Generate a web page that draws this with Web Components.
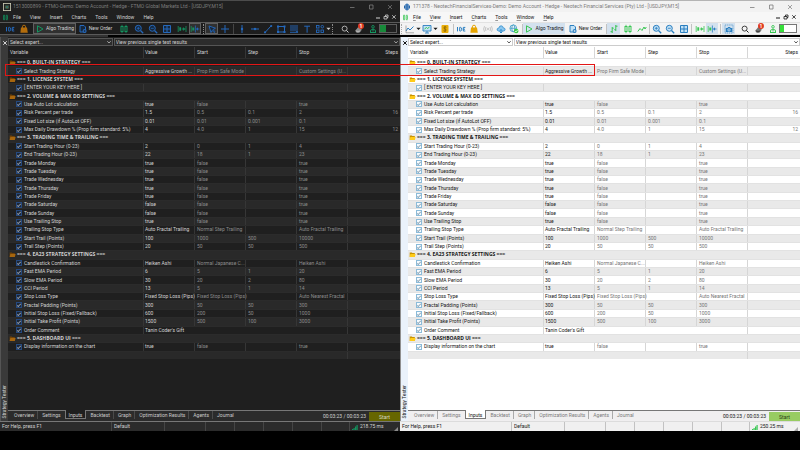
<!DOCTYPE html>
<html lang="en">
<head>
<meta charset="utf-8">
<title>Strategy Tester inputs</title>
<style>
html,body{margin:0;height:100%;background:#000}
body{font-family:Roboto,"Open Sans",sans-serif;font-size:5px;line-height:7px}
</style>
</head>
<body>
<tester-desk></tester-desk>
<script>
const ICONS={
ide:'<g fill="none" stroke="var(--blue)"><path d="M1.5 3v4.4M3.7 3.4v3.6h1c1.400 0 1.400-3.600 0-3.600zM9.300 3.400H7.300v3.600h2M7.300 5.200h1.700"/></g>',
bag:'<path d="M3.400 4V2.800a1.600 1.600 0 0 1 3.200 0V4" fill="none" stroke="var(--bag)"/><path d="M2 3.600h6l.8 5.200H1.400z" fill="var(--bag)"/>',
play:'<path d="M2.500 1.800v6.400L8 5z" fill="none" stroke="var(--green)"/>',
order:'<path d="M2 1.500h4l1.500 1.500v5H2z" fill="var(--pale)" stroke="var(--blue)"/><circle cx="6.600" cy="7" r="2" fill="var(--blue)"/><path d="M5.600 7h2M6.600 6v2" stroke="var(--bar)" stroke-width=".6"/>',
candle:'<g stroke="var(--green)" fill="none"><path d="M3 .8v8.400M7 .8v8.400" stroke-width=".8"/><rect x="2" y="2.500" width="2" height="5" fill="var(--bar)"/><rect x="6" y="2.500" width="2" height="5" fill="var(--bar)"/></g>',
zin:'<path d="M6.500 6.500L9.200 9.200" stroke="var(--blue)" stroke-width="1.300"/><circle cx="4.300" cy="4.300" r="3" fill="var(--pale)" stroke="var(--blue)"/><path d="M2.800 4.300h3M4.300 2.800v3" stroke="var(--blue)" stroke-width=".8"/>',
zout:'<path d="M6.500 6.500L9.200 9.200" stroke="var(--blue)" stroke-width="1.300"/><circle cx="4.300" cy="4.300" r="3" fill="var(--pale)" stroke="var(--blue)"/><path d="M2.800 4.300h3" stroke="var(--blue)" stroke-width=".8"/>',
grid:'<path d="M1.500 1.500h7v7h-7zM5 1.500v7M1.500 5h7" fill="var(--pale)" stroke="var(--blue)"/>',
shift:'<g stroke="var(--green)" fill="var(--green)"><path d="M1.200 2v6M9 2v6M5 5h3.500" stroke-width=".8"/><path d="M2.500 3.500h1.500v3H2.500zM6.200 3.500L7.800 5 6.200 6.500z" stroke-width=".4"/></g>',
shiftb:'<path d="M1.200 2v6" stroke="var(--green)" stroke-width=".8"/><path d="M2.300 3.500h2v3h-2z" fill="var(--green)"/><path d="M5.400 1.500v7M6.500 5h3" stroke="var(--blue)" stroke-width=".8"/><path d="M8 3.300L6 5l2 1.700z" fill="var(--blue)"/>',
pointer:'<path d="M2 2l6.500 2.200-2.500 1.300L8 7.800l-.8.8-2-2.200L4 8.500z" fill="var(--pale)" stroke="var(--blue)" stroke-width=".9"/>',
cross:'<path d="M5 1v8M1 5h8" stroke="var(--blue)"/>',
vline:'<path d="M5 1v8" stroke="var(--blue)"/><circle cx="5" cy="5" r="1.200" fill="var(--blue)"/>',
hline:'<path d="M1 5h8" stroke="var(--blue)"/><circle cx="5" cy="5" r="1.200" fill="var(--blue)"/>',
trend:'<path d="M2 8.500L8 2" stroke="var(--blue)"/><circle cx="2" cy="8.300" r="1.100" fill="var(--blue)"/><circle cx="8.200" cy="2" r="1.100" fill="var(--blue)"/>',
rect:'<path d="M2 2.500h6.500v5.500H2z" fill="none" stroke="var(--blue)"/><path d="M1 1.500h2v2H1zM7.500 1.500h2v2h-2zM1 7h2v2H1zM7.500 7h2v2h-2z" fill="var(--blue)"/>',
fibo:'<path d="M1 2h8M1 4h8M1 6h8M1 8.300h6" stroke="var(--blue)" stroke-width=".9"/><circle cx="8" cy="8" r="1.100" fill="var(--blue)"/>',
text:'<path d="M2.200 2.200h5.800M5.100 2.200v6.500" stroke="var(--blue)"/>',
shapes:'<g fill="none" stroke="var(--blue)" stroke-width=".9"><rect x="1.500" y="1.500" width="2.500" height="2.500"/><circle cx="7.300" cy="2.700" r="1.300"/><rect x="1.500" y="6" width="2.500" height="2.500"/><rect x="6" y="6" width="2.500" height="2.500"/></g>',
search:'<path d="M6.500 6.500L8.500 8.500" stroke="var(--ink)"/><circle cx="4.600" cy="4.600" r="2.500" fill="none" stroke="var(--ink)" stroke-width=".8"/>',
person:'<circle cx="5" cy="2.800" r="1.300" fill="none" stroke="var(--green)" stroke-width=".9"/><path d="M2.500 8.500V6.300Q5 3.700 7.500 6.300v2.200M5 5v2.500M2 8.500h6" fill="none" stroke="var(--green)"/>',
lines:'<path d="M1 7l2-3 2 2 3.500-3.500" fill="none" stroke="var(--blue)"/><path d="M1 1.500v7.300h8" fill="none" stroke="var(--dim)" stroke-width=".6"/>',
monitor:'<path d="M1 1.500h8v5.500H1zM3 9h4M5 7v2" fill="var(--pale)" stroke="var(--blue)" stroke-width=".9"/><path d="M2.500 5l2-1.500 1 1L7.500 3" fill="none" stroke="var(--green)"/>',
dollar:'<rect x="1.500" y="1" width="7" height="8" rx="1" fill="#e9ad08"/><path d="M6.400 3.300C5.500 2.500 3.700 3 3.800 4S6.300 5 6.300 6 4.500 7.500 3.500 6.700M5 2v6" fill="none" stroke="#7c5a00" stroke-width=".7"/>',
signal:'<g fill="none" stroke="#b9b9b9" stroke-width=".8"><circle cx="5" cy="5" r=".8"/><path d="M3 3Q1.900 5 3 7M7 3q1.100 2 0 4M1.500 2.200Q-.2 5 1.500 7.800M8.500 2.200Q10.200 5 8.500 7.800"/></g>',
cloud:'<path d="M2.500 7Q.5 6.500 1.200 4.800 1.800 4 2.700 4.200 3.300 1.700 5.200 1.800 7 2 7.300 3.900 9.300 4 9.100 5.800 8.800 7 7.500 7z" fill="#8cc7ef" stroke="#2d8bcc" stroke-width=".8"/><path d="M5 5v4M3.500 7.500L5 9l1.500-1.500" fill="none" stroke="#2d8bcc"/>',
globe:'<g fill="none" stroke="#3a9bc6" stroke-width=".8"><circle cx="4.300" cy="4.300" r="3.400"/><ellipse cx="4.300" cy="4.300" rx="1.500" ry="3.400"/><path d="M1 4.300h6.500"/></g><circle cx="7.200" cy="7" r="2.300" fill="#3dcc4b"/><path d="M6 7l1 1 1.600-2" fill="none" stroke="#fff" stroke-width=".7"/>',
bars:'<path d="M3.200 3v6M1.500 7.700h1.700M3.200 4.200h1.500M6.800 1v6M5.300 5.700h1.500M6.800 2.200h1.700" fill="none" stroke="var(--green)"/>',
zig:'<path d="M.8 7.500l2.200-3 2 2 2-3.500 1 2 1.300-2" fill="none" stroke="var(--green)"/>',
camera:'<rect x="1" y="1" width="8" height="8" fill="none" stroke="var(--blue)" stroke-width=".6" stroke-dasharray="1.300 .8"/><path d="M1.800 4h1.700l.7-1h1.800l.7 1h1.600v4H1.800z" fill="var(--blue)"/><circle cx="5" cy="5.900" r="1.200" fill="var(--blue)" stroke="#fff" stroke-width=".6"/>',
bell:'<path d="M1.200 6.500Q3 4.800 3.600 3.700 5.200 2 7 3.500 8.300 5 7.300 6.500L6 8.200Q4 9.500 2 8.300z" fill="var(--dim)"/><path d="M2 7Q4 8 6 7" fill="none" stroke="var(--ink)" stroke-width=".6"/>',
caret:'<path d="M2 4h6L5 7z" fill="var(--ink)"/>',
logo1:'<rect x=".5" y=".5" width="9" height="9" fill="#222" stroke="#d0d0b8"/><circle cx="5" cy="5" r="2" fill="#83a84c"/><path d="M3 3l4 4M7 3L3 7" stroke="#255c75"/>',
logo2:'<path d="M5 .5L7 1.500v7L5 9.500 3 8.500v-7z" fill="#1c5fa6"/><path d="M2 3v4M8 3v4" stroke="#1c5fa6" stroke-width="1.400"/><path d="M5 1v8" stroke="#b8d8f5" stroke-width=".6"/>',
folder:'<path d="M1 2h3l.8 1h3.500v5.300H1z" fill="var(--fold2)"/><path d="M2 4.200h7.500L8.300 8.500H.8z" fill="var(--fold)"/>'
};
const svg=(n,c='')=>`<svg class="${c}" viewBox="0 0 10 10" aria-hidden="true">${ICONS[n]||''}</svg>`;

const define=(name,css,html)=>customElements.define(name,class extends HTMLElement{
  connectedCallback(){
    const t=document.createElement('template');
    t.innerHTML=`<style>*{box-sizing:border-box}button,select,input{font:inherit;color:inherit;margin:0;padding:0;border:0;background:none;border-radius:0;outline:0}svg{display:block;flex:none;width:10px;height:10px}${css}</style>`+(typeof html==='function'?html(this):html);
    this.attachShadow({mode:'open'}).append(t.content.cloneNode(true));
  }
});

define('title-bar',`
:host{display:flex;align-items:center;height:11px;padding:0 7px 0 3px;gap:2px;background:var(--title);color:var(--titleInk)}
span{flex:1;white-space:nowrap}
svg{width:8px;height:8px}
div{display:flex;gap:13px}button{display:block;width:6px;height:6px}button svg{width:6px;height:6px}
`,h=>`${svg(h.getAttribute('logo'))}<span><slot></slot></span><div>
<button aria-label="Minimize"><svg viewBox="0 0 6 6"><path d="M1 3.500h4.500" stroke="currentColor" stroke-width=".8"/></svg></button>
<button aria-label="Maximize"><svg viewBox="0 0 6 6"><path d="M1.500 1h3.500v4H1.500z" fill="none" stroke="currentColor" stroke-width=".8"/></svg></button>
<button aria-label="Close"><svg viewBox="0 0 6 6"><path d="M1 1l4 4M5 1L1 5" stroke="currentColor" stroke-width=".7"/></svg></button></div>`);

define('menu-bar',`
:host{display:flex;align-items:center;height:10px;padding:0 3px 0 2px;background:var(--menu);color:var(--ink)}
nav{display:flex;flex:1;gap:9px;padding-left:4px}
svg{width:7px;height:7px}div{display:flex;gap:2px}button{display:block}div svg{width:6px;height:6px}
u{text-decoration-thickness:1px;text-decoration-color:var(--under)}
`,`${svg('candle')}<nav>${['File','View','Insert','Charts','Tools','Window','Help'].map(m=>`<button><u>${m[0]}</u>${m.slice(1)}</button>`).join('')}</nav><div>
<button aria-label="Minimize chart"><svg viewBox="0 0 6 6"><path d="M1 4h4" stroke="currentColor"/></svg></button>
<button aria-label="Restore chart"><svg viewBox="0 0 6 6"><path d="M1 2.500h3V5H1zM2.500 2.500V1H5v2.500H4" fill="none" stroke="currentColor" stroke-width=".8"/></svg></button>
<button aria-label="Close chart"><svg viewBox="0 0 6 6"><path d="M1.200 1.200l3.500 3.500M4.700 1.200L1.200 4.700" stroke="currentColor" stroke-width=".8"/></svg></button></div>`);

/* name:weight[:on]; sep draws a divider, grip a dotted handle, - is blank space */
const TOOLS={
dark:'-:3 ide:14 bag:13 -:3 play:43:on order:38 -:3 candle:14 -:1 zin:14 zout:14 grid:13 -:2 shift:14 shiftb:12:on grip:4 pointer:13:on cross:14 sep:3 vline:13 hline:13 trend:13 rect:13 fibo:14 text:12 shapes:13 caret:4 grip:4 -:4 search:13 bell:15 person:13 battery:18 -:3',
light:'grip:3 lines:13 caret:4 monitor:13 caret:4 dollar:15 sep:2 ide:13 bag:14 signal:13 cloud:13 globe:14 sep:2 play:42:on order:40 sep:2 bars:13:on candle:15 zig:13 sep:2 zin:13 zout:14 grid:13 sep:3 shift:13 shiftb:12:on sep:4 camera:13:on -:3 search:13 bell:15 person:13 battery:18 -:3'
};
define('tool-bar',`
:host{display:flex;align-items:stretch;height:13px;background:var(--bar);color:var(--ink);border-top:1px solid var(--barLine);border-bottom:1px solid var(--barLine)}
button,i{display:flex;align-items:center;justify-content:center;flex:1 1 0;min-width:0;position:relative;white-space:nowrap;overflow:visible}
.wide{gap:1px}
.on{background:var(--on);box-shadow:inset 0 0 0 1px var(--onLine)}
.sep::before{content:"";width:1px;height:10px;background:var(--sep)}
.grip::before{content:"";height:10px;border-left:1px dotted var(--grip)}
.caret svg{width:7px;height:7px}
b{position:absolute;right:2px;top:0;width:6px;height:6px;border-radius:3px;background:#e03a20;color:#fff;font-size:5px;line-height:6px;text-align:center}
.battery::before{content:"";width:100%;height:7px;border:1px solid var(--batt);background:linear-gradient(90deg,var(--charge) var(--level),var(--battBg) 0)}
`,h=>TOOLS[h.getAttribute('set')].split(' ').map(s=>{
  const [n,w,on]=s.split(':'),st=`style="flex-grow:${w}"`;
  if(n==='-'||n==='sep'||n==='grip'||n==='battery')return `<i class="${n==='-'?'':n}" ${st}></i>`;
  const label={play:'Algo Trading',order:'New Order'}[n]||'';
  return `<button class="${on||''} ${label?'wide':''} ${n}" ${st} aria-label="${label||n}">${svg(n)}${label?`<span>${label}</span>`:''}${n==='bell'?'<b>1</b>':''}</button>`;
}).join(''));

const R=[
['g','=== 0. BUILT-IN STRATEGY ==='],
['Select Trading Strategy','Aggressive Growth ...','Prop Firm Safe Mode','','Custom Settings (U...',''],
['g','=== 1. LICENSE SYSTEM ==='],
['[ ENTER YOUR KEY HERE ]',''],
['g','=== 2. VOLUME & MAX DD SETTINGS ==='],
['Use Auto Lot calculation','true','false','','true',''],
['Risk Percent per trade','1.5','0.5','0.1','2','16'],
['Fixed Lot size (if AutoLot OFF)','0.01','0.01','0.001','0.1',''],
['Max Daily Drawdown % (Prop firm standard: 5%)','4','4.0','1','15','12'],
['g','=== 3. TRADING TIME & TRAILING ==='],
['Start Trading Hour (0-23)','2','0','1','4',''],
['End Trading Hour (0-23)','22','18','1','23',''],
...['Monday','Tuesday','Wednesday','Thursday','Friday'].map(d=>['Trade '+d,'true','false','','true','']),
['Trade Saturday','false','false','','true',''],
['Trade Sunday','false','false','','true',''],
['Use Trailing Stop','true','false','','true',''],
['Trailing Stop Type','Auto Fractal Trailing','Normal Step Trailing','','Auto Fractal Trailing',''],
['Start Trail (Points)','100','1000','500','10000',''],
['Trail Step (Points)','20','50','50','500',''],
['g','=== 4. EA23 STRATEGY SETTINGS ==='],
['Candlestick Confirmation','Heiken Ashi','Normal Japanese C...','','Heiken Ashi',''],
['Fast EMA Period','6','5','1','20',''],
['Slow EMA Period','30','20','2','80',''],
['CCI Period','13','5','1','14',''],
['Stop Loss Type','Fixed Stop Loss (Pips)','Fixed Stop Loss (Pips)','','Auto Nearest Fractal',''],
['Fractal Padding (Points)','300','50','50','300',''],
['Initial Stop Loss (Fixed/Fallback)','600','200','50','1000',''],
['Initial Take Profit (Points)','1500','500','100','3000',''],
['Order Comment',"Tanin Coder's Gift"],
['g','=== 5. DASHBOARD UI ==='],
['Display information on the chart','true','false','','true',''],
['e']
];
define('input-table',`
:host{display:flex;flex-direction:column;min-height:0;background:var(--row);color:var(--ink)}
table{flex:312 1 0;min-height:0;display:grid;grid-template-rows:11px repeat(36,minmax(0,1fr));grid-template-columns:136fr repeat(4,51fr) 52fr}
thead,tbody{display:contents}
tr{display:grid;grid-template-columns:subgrid;grid-column:1/-1;min-height:0}
th,td{display:flex;align-items:center;padding:0 0 0 1px;white-space:nowrap;min-width:0;font-weight:400;text-align:left;border-right:1px solid var(--line)}
th:nth-child(n+3),td:nth-child(n+3){padding-left:2px}
th:last-child,td:last-child{justify-content:flex-end;border-right:0;padding-right:2px}
th:first-child{padding-left:2px}
tbody tr:nth-child(even){background:var(--alt)}
tbody tr{border-top:1px solid var(--rowLine)}
tbody td:nth-child(n+3){color:var(--dim)}
td.s5{grid-column:span 5}td.s4{grid-column:span 4}
td.g{grid-column:1/-1;justify-content:flex-start;font-family:"Open Sans",sans-serif;font-weight:700;padding:0 1px;gap:1px}
td.g svg{width:7px;height:7px}
td.k{padding-left:8px}
label{display:flex;align-items:center;gap:2px}
input{appearance:none;width:6px;height:6px;border:1px solid var(--tick);background:var(--tickBg);display:grid;place-items:center}
input:checked::after{content:"";width:3px;height:1px;border-left:1px solid var(--tickInk);border-bottom:1px solid var(--tickInk);transform:rotate(-45deg)}
.rest{flex:51 1 0}
`,()=>`<table><thead><tr>${['Variable','Value','Start','Step','Stop','Steps'].map(x=>`<th scope="col">${x}</th>`).join('')}</tr></thead><tbody>${R.map(r=>{
 if(r[0]==='g')return `<tr><td class="g" colspan="6">${svg('folder')}<span>${r[1].replace('&','&amp;')}</span></td></tr>`;
 if(r[0]==='e')return '<tr><td class="s5" colspan="5"></td><td></td></tr>';
 const k=`<td class="k"><label><input type="checkbox" checked><span>${r[0]}</span></label></td>`;
 if(r.length===2)return `<tr>${k}<td class="s4" colspan="4">${r[1]}</td><td></td></tr>`;
 return `<tr>${k}${r.slice(1).map(x=>`<td>${x}</td>`).join('')}</tr>`;}).join('')}</tbody></table><div class="rest"></div>`);

define('tester-panel',`
:host{display:grid;grid-template-columns:8px minmax(0,1fr);min-height:0;flex:1;background:var(--row);color:var(--ink)}
aside{display:flex;flex-direction:column;justify-content:space-between;align-items:center;background:var(--side);padding:3px 0;border-left:1px solid var(--edge)}
aside span{writing-mode:vertical-rl;transform:rotate(180deg);white-space:nowrap}
aside svg{width:6px;height:6px}
section{display:flex;flex-direction:column;min-width:0;min-height:0}
.pick{display:grid;grid-template-columns:105fr 287fr;height:10px;padding:1px 0;gap:1px;background:var(--row)}
.pick label{position:relative;display:flex;min-width:0}
select{appearance:none;flex:1;min-width:0;height:8px;padding:0 1px;border:1px solid var(--boxLine);background:var(--box);line-height:6px}
.pick svg{position:absolute;right:2px;top:2px;width:4px;height:4px;pointer-events:none}
input-table{flex:1}
footer{display:flex;height:11px;align-items:stretch;background:var(--tabs);border-top:1px solid var(--tabLine);padding-left:2px;color:var(--tabInk)}
footer button{padding:1px 3px 0 4px;height:8px;line-height:7px;white-space:nowrap;border-right:1px solid var(--tabSep)}
footer .now{height:9px;margin-top:-1px;padding:2px 3px 0;background:var(--row);color:var(--ink);border:1px solid var(--tabLine);border-top:0}
footer button:nth-child(2),footer button:nth-child(8){border-right-color:transparent}
footer output{margin-left:auto;padding:1px 3px 0;line-height:8px;color:var(--ink)}
footer .go{background:var(--go);width:31px;height:auto;border:0;padding:0;margin-top:1px;line-height:8px;color:var(--goInk)}
`,`<aside><svg viewBox="0 0 6 6"><path d="M1.200 1.200l3.600 3.600M4.800 1.200L1.200 4.800" stroke="currentColor"/></svg><span>Strategy Tester</span></aside>
<section><div class="pick">${['Select expert...','View previous single test results'].map(x=>`<label><select aria-label="${x}"><option>${x}</option></select><svg viewBox="0 0 4 4"><path d="M.3 1.200L2 3l1.700-1.800" fill="none" stroke="currentColor" stroke-width=".7"/></svg></label>`).join('')}</div>
<input-table></input-table>
<footer>${['Overview','Settings','Inputs','Backtest','Graph','Optimization Results','Agents','Journal'].map(t=>`<button class="${t==='Inputs'?'now':''}">${t}</button>`).join('')}<output>00:03:23 / 00:03:23</output><button class="go">Start</button></footer></section>`);

define('status-bar',`
:host{display:grid;grid-template-columns:112fr 53fr 41fr 29fr 29fr 29fr 29fr 28fr 50fr;height:10px;background:var(--status);color:var(--ink);border-top:1px solid var(--statusLine)}
div{display:flex;align-items:center;gap:2px;padding:0 2px;border-right:1px solid var(--sep);white-space:nowrap;min-width:0}
div:last-child{border:0}
svg{width:6px;height:6px}.size{margin-left:auto;width:4px;height:4px;align-self:end}
`,`<div>For Help, press F1</div><div>Default</div><div></div><div></div><div></div><div></div><div></div><div></div>
<div><svg viewBox="0 0 6 6"><path d="M0 6V5h1.200v1zM1.500 6V4h1.200v2zM3 6V2.500h1.200V6zM4.500 6V1h1.200v5z" fill="var(--green)"/></svg><slot></slot><svg class="size" viewBox="0 0 4 4"><path d="M4 0v4H0z" fill="var(--grip)"/></svg></div>`);

define('terminal-window',`
:host{display:flex;flex-direction:column;min-width:0;min-height:0;border-top:1px solid var(--top)}
:host([theme=dark]){--title:#202020;--titleInk:#7c7c7c;--menu:#202020;--ink:#d2d2d2;--under:transparent;--bar:#1d1d1d;--barLine:#5a5a5a;--top:#4c4c4c;--on:#303030;--onLine:#606060;--sep:#454545;--grip:#8a8a8a;--blue:#2468bc;--green:#139560;--pale:#16273b;--bag:#b36d0c;--dim:#8c8c8c;--batt:#5c5c5c;--battBg:#202020;--charge:#188a3a;--level:40%;--row:#1f1f1f;--alt:#292929;--line:#363636;--rowLine:#2b2b2b;--fold:#a7660e;--fold2:#704207;--tick:#25497f;--tickBg:#1c2737;--tickInk:#8f98a5;--side:#3a3a3a;--edge:#555;--boxLine:#555;--box:#2c2c2c;--tabs:#2b2b2b;--tabLine:#777;--tabSep:#4a4a4a;--tabInk:#cacaca;--go:#666600;--goInk:#d8d8c0;--status:#2b2b2b;--statusLine:#777;--rule:linear-gradient(90deg,#333 27%,#000 0)}
:host([theme=light]){--title:#f2f2f2;--titleInk:#7c7c7c;--menu:#f7f7f7;--ink:#161616;--under:#999;--bar:#f3f3f3;--barLine:#e2e2e2;--top:#b4b4b4;--on:#d3e1ee;--onLine:#d3e1ee;--sep:#c2c2c2;--grip:#aaa;--blue:#2b7fc0;--green:#38c653;--pale:#c3e2f6;--bag:#e6a400;--dim:#767676;--batt:#777;--battBg:#fff;--charge:#36df3a;--level:28%;--row:#fff;--alt:#e9e9e9;--line:#d6d6d6;--rowLine:#e2e2e2;--fold:#ffcb18;--fold2:#c99300;--tick:#8bbbd9;--tickBg:#f6fbff;--tickInk:#93a9b8;--side:#eaf2fb;--edge:#8f8f8f;--boxLine:#ccc;--box:#fff;--tabs:#f0eff0;--tabLine:#777;--tabSep:#aaa;--tabInk:#7b7b7b;--go:#98cc62;--goInk:#263b14;--status:#f0f0f0;--statusLine:#dcdcdc;--rule:#000}
hr{height:2px;margin:0;border:0;background:var(--rule)}
`,h=>`<title-bar logo="${h.getAttribute('logo')}"><slot></slot></title-bar><menu-bar></menu-bar><tool-bar set="${h.getAttribute('theme')}"></tool-bar><hr><tester-panel></tester-panel><status-bar>${h.getAttribute('ping')}</status-bar>`);

define('tester-desk',`
:host{display:grid;grid-template-columns:1fr 1fr;height:100vh;min-height:430px;padding-bottom:19px;box-sizing:border-box;position:relative;background:#000}
.mark{position:absolute;left:5px;right:25.6%;top:64px;height:12px;border:1px solid #e31616;pointer-events:none;box-sizing:border-box}
`,`<terminal-window theme="dark" logo="logo1" ping="218.75 ms">1513000899 - FTMO-Demo: Demo Account - Hedge - FTMO Global Markets Ltd - [USDJPY,M15]</terminal-window>
<terminal-window theme="light" logo="logo2" ping="250.25 ms">171378 - NeotechFinancialServices-Demo: Demo Account - Hedge - Neotech Financial Services (Pty) Ltd - [USDJPY,M15]</terminal-window>
<div class="mark"></div>`);
</script>
</body>
</html>
